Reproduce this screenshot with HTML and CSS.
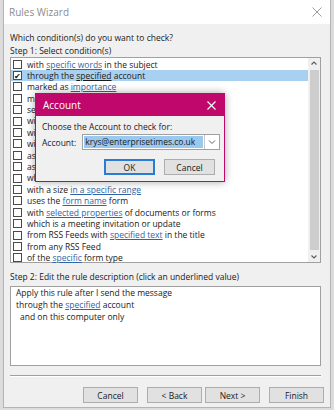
FILE: index.html
```html
<!DOCTYPE html>
<html lang="en">
<head>
    <meta charset="UTF-8">
    <title>Rules Wizard</title>
    <link rel="stylesheet" href="styles.css">
</head>
<body>
    <div class="window">
        <div class="titlebar">
            <span class="title">Rules Wizard</span>
            <svg class="close" width="10" height="10" viewBox="0 0 10 10"><path d="M0.5 0.5L9.5 9.5M9.5 0.5L0.5 9.5" stroke="#9a9a9a" stroke-width="1" fill="none"/></svg>
        </div>
        <div class="content">
            <div class="label">Which condition(s) do you want to check?</div>
            <div class="label">Step 1: Select condition(s)</div>
            <div class="listbox">
                <div class="rows">
                    <div class="row"><span class="box"></span><span>with <a>specific words</a> in the subject</span></div>
                    <div class="row selected"><span class="box checked">&#10004;</span><span>through the <a>specified</a> account</span></div>
                    <div class="row"><span class="box"></span><span>marked as <a>importance</a></span></div>
                    <div class="row"><span class="box"></span><span>marked as <a>sensitivity</a></span></div>
                    <div class="row"><span class="box"></span><span>sent to <a>people or public group</a></span></div>
                    <div class="row"><span class="box"></span><span>with <a>specific words</a> in the body</span></div>
                    <div class="row"><span class="box"></span><span>with <a>specific words</a> in the subject or body</span></div>
                    <div class="row"><span class="box"></span><span>with <a>specific words</a> in the recipient's address</span></div>
                    <div class="row"><span class="box"></span><span>assigned to <a>category</a> category</span></div>
                    <div class="row"><span class="box"></span><span>assigned to any category</span></div>
                    <div class="row"><span class="box"></span><span>which has an attachment</span></div>
                    <div class="row"><span class="box"></span><span>with a size <a>in a specific range</a></span></div>
                    <div class="row"><span class="box"></span><span>uses the <a>form name</a> form</span></div>
                    <div class="row"><span class="box"></span><span>with <a>selected properties</a> of documents or forms</span></div>
                    <div class="row"><span class="box"></span><span>which is a meeting invitation or update</span></div>
                    <div class="row"><span class="box"></span><span>from RSS Feeds with <a>specified text</a> in the title</span></div>
                    <div class="row"><span class="box"></span><span>from any RSS Feed</span></div>
                    <div class="row"><span class="box"></span><span>of the <a>specific</a> form type</span></div>
                </div>
                <div class="scrollbar">
                    <svg width="12" height="11" viewBox="0 0 12 11"><path d="M3.5 6.5L6 4L8.5 6.5" stroke="#606060" stroke-width="1.2" fill="none"/></svg>
                    <div class="thumb"></div>
                    <svg width="12" height="11" viewBox="0 0 12 11"><path d="M3.5 4.5L6 7L8.5 4.5" stroke="#606060" stroke-width="1.2" fill="none"/></svg>
                </div>
            </div>
            <div class="label step2">Step 2: Edit the rule description (click an underlined value)</div>
            <div class="description">
                <div>Apply this rule after I send the message</div>
                <div>through the <a>specified</a> account</div>
                <div class="indent">and on this computer only</div>
            </div>
            <div class="separator"></div>
            <div class="buttons">
                <button class="btn">Cancel</button>
                <button class="btn back">&lt; Back</button>
                <button class="btn">Next &gt;</button>
                <button class="btn finish">Finish</button>
            </div>
        </div>

        <div class="dialog">
            <div class="dialog-title">
                <span>Account</span>
                <svg width="9" height="9" viewBox="0 0 9 9"><path d="M0.5 0.5L8.5 8.5M8.5 0.5L0.5 8.5" stroke="#ffffff" stroke-width="1.1" fill="none"/></svg>
            </div>
            <div class="dialog-body">
                <div>Choose the Account to check for:</div>
                <div class="field">
                    <span>Account:</span>
                    <div class="combo">
                        <span class="combo-value">krys@enterprisetimes.co.uk</span>
                        <span class="combo-arrow">
                            <svg width="10" height="8" viewBox="0 0 10 8"><path d="M2 2.5L5 5.5L8 2.5" stroke="#606060" stroke-width="1" fill="none"/></svg>
                        </span>
                    </div>
                </div>
                <div class="dialog-buttons">
                    <button class="btn default">OK</button>
                    <button class="btn">Cancel</button>
                </div>
            </div>
        </div>
    </div>
</body>
</html>
```

FILE: styles.css
```css
body {
    margin: 0;
    padding: 0;
    background: #dcdcdc;
    font-family: "Open Sans", "Noto Sans", sans-serif;
    font-size: 8.5px;
    color: #1a1a1a;
}

.window {
    position: relative;
    margin-left: 3px;
    width: 326px;
    height: 407px;
    border: 1px solid #b4b4b4;
    border-top: none;
    background: #f0f0f0;
}

.titlebar {
    height: 24px;
    background: #ffffff;
    display: flex;
    align-items: center;
    justify-content: space-between;
    padding: 0 8px 0 5px;
}

.title {
    font-size: 10px;
    color: #8c8c8c;
}

.content {
    padding: 7px 9px 0 6px;
}

.label {
    height: 13px;
    line-height: 13px;
}

.listbox {
    display: flex;
    height: 204px;
    border: 1px solid #a0a0a0;
    background: #ffffff;
}

.rows {
    flex: 1;
    padding-top: 0.5px;
}

.row {
    height: 11.4px;
    display: flex;
    align-items: center;
    white-space: nowrap;
}

.row > span:last-child {
    line-height: 11.4px;
}

.row.selected {
    background: #a8d0f0;
}

.box {
    width: 7px;
    height: 7px;
    border: 1px solid #4a4a4a;
    background: #ffffff;
    margin: 0 5px 0 2px;
    flex-shrink: 0;
    font-size: 8px;
    line-height: 7px;
    text-align: center;
    color: #111;
}

a {
    color: #2f64a8;
    text-decoration: underline;
}

.selected a {
    color: #1a1a1a;
}

.scrollbar {
    width: 12px;
    background: #f0f0f0;
    display: flex;
    flex-direction: column;
    align-items: center;
}

.scrollbar svg {
    flex-shrink: 0;
}

.thumb {
    flex: 1;
    width: 9px;
    background: #cdcdcd;
    margin: 1px 0;
}

.step2 {
    margin-top: 7px;
}

.description {
    height: 78px;
    margin-top: 3px;
    border: 1px solid #a0a0a0;
    background: #ffffff;
    padding: 0 5px;
    line-height: 12px;
}

.indent {
    padding-left: 4px;
}

.separator {
    margin-top: 9px;
    height: 1px;
    background: #a0a0a0;
    border-bottom: 1px solid #ffffff;
}

.buttons {
    display: flex;
    justify-content: flex-end;
    margin-top: 10px;
    margin-right: -3px;
}

.btn {
    width: 55px;
    height: 16px;
    padding: 0;
    margin-left: 3px;
    border: 1px solid #adadad;
    background: #e1e1e1;
    font-family: "Open Sans", "Noto Sans", sans-serif;
    font-size: 8.5px;
    color: #1a1a1a;
}

.back {
    margin-left: 9px;
}

.finish {
    margin-left: 9px;
}

/* overlay dialog */
.dialog {
    position: absolute;
    left: 31px;
    top: 93px;
    width: 188px;
    height: 87px;
    border: 1px solid #c0086c;
    background: #f0f0f0;
    box-shadow: 0 0 8px rgba(0, 0, 0, 0.35);
}

.dialog-title {
    height: 22px;
    background: #c0086c;
    color: #ffffff;
    font-size: 10px;
    display: flex;
    align-items: center;
    justify-content: space-between;
    padding: 0 8px 0 7px;
}

.dialog-body {
    padding: 5px 0 0 6px;
}

.field {
    display: flex;
    align-items: center;
    margin-top: 2px;
}

.combo {
    display: flex;
    margin-left: 6px;
    width: 136px;
    height: 14px;
    border: 1px solid #a0a0a0;
    background: #ffffff;
}

.combo-value {
    flex: 1;
    margin: 1px;
    background: #99c9ef;
    line-height: 12px;
    padding-left: 1px;
    white-space: nowrap;
    overflow: hidden;
}

.combo-arrow {
    width: 14px;
    border-left: 1px solid #c8c8c8;
    display: flex;
    align-items: center;
    justify-content: center;
}

.dialog-buttons {
    display: flex;
    margin-top: 9px;
    padding-left: 62px;
}

.dialog-buttons .btn {
    margin-left: 0;
    margin-right: 9px;
}

.btn.default {
    border: 1px solid #2b7bd4;
    box-shadow: inset 0 0 0 1px #2b7bd4;
}
```
